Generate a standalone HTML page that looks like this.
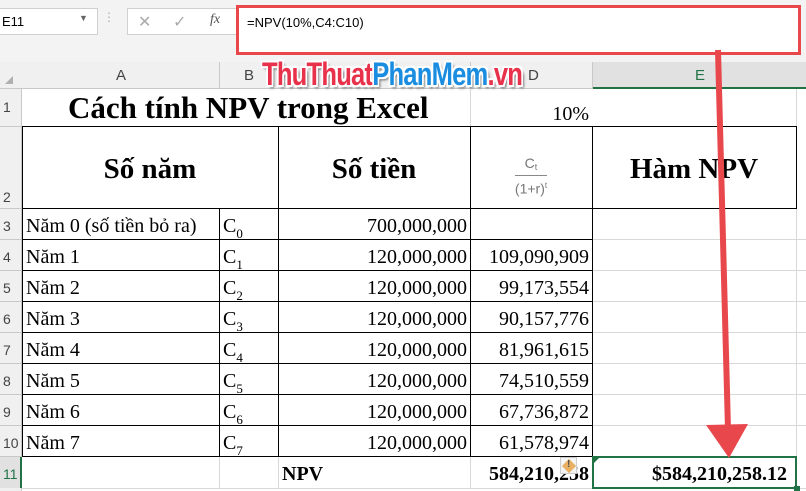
<!DOCTYPE html><html><head><meta charset="utf-8"><style>
*{margin:0;padding:0;box-sizing:border-box}
body{width:806px;height:491px;overflow:hidden;background:#fff;position:relative;font-family:"Liberation Serif",serif}
.a{position:absolute}
.t{position:absolute;font-size:20px;line-height:31px;white-space:nowrap;color:#000}
.r{text-align:right}
.hl{position:absolute;height:1px;background:#000}
.vl{position:absolute;width:1px;background:#000}
.gh{position:absolute;height:1px;background:#d8d8d8}
.gv{position:absolute;width:1px;background:#d8d8d8}
.rn{position:absolute;left:0;width:22px;font-family:"Liberation Sans",sans-serif;font-size:14px;color:#444;text-align:left;padding-left:3px}
sub{font-size:13px;vertical-align:-6px}
.ch{position:absolute;font:15px 'Liberation Sans',sans-serif;color:#444;top:67px}
</style></head><body>
<div class="a" style="left:0;top:0;width:806px;height:62px;background:#f3f3f3"></div>
<div class="a" style="left:-2px;top:8px;width:100px;height:27px;background:#fff;border:1px solid #d0d0d0;font:13px 'Liberation Sans',sans-serif;padding:5px 3px">E11<span style="position:absolute;left:80px;top:4px;font-size:9px;color:#666">▼</span></div>
<div class="a" style="top:10px;font:12px sans-serif;color:#aaa;left:103px;">⋮</div>
<div class="a" style="left:127px;top:8px;width:110px;height:27px;background:#fff;border:1px solid #d0d0d0;font:16px 'Liberation Sans',sans-serif;color:#aaa"><span class="a" style="left:10px;top:3px">✕</span><span class="a" style="left:45px;top:3px">✓</span><span class="a" style="left:82px;top:3px;font:italic 14px 'Liberation Serif';color:#555">fx</span></div>
<div class="a" style="left:236px;top:5px;width:565px;height:50px;background:#fff;border:3px solid #e8474c;font:13px 'Liberation Sans',sans-serif;padding:7px 8px">=NPV(10%,C4:C10)</div>
<div class="a" style="left:0;top:62px;width:806px;height:27px;background:#f0f0f0;border-bottom:1px solid #c8c8c8"></div>
<div class="a" style="left:592px;top:62px;width:214px;height:27px;background:#e1e1e1;border-bottom:2px solid #217346"></div>
<div class="a" style="left:0;top:89px;width:22px;height:402px;background:#f0f0f0;border-right:1px solid #c8c8c8"></div>
<div class="a" style="left:0;top:457px;width:22px;height:31px;background:#e1e1e1;border-right:2px solid #217346"></div>
<div class="a" style="left:5px;top:76px;width:8px;height:0;border-left:8px solid transparent;border-bottom:8px solid #b0b0b0"></div>
<div class="ch" style="left:116px">A</div>
<div class="ch" style="left:244px">B</div>
<div class="ch" style="left:528px">D</div>
<div class="ch" style="left:695px;color:#217346">E</div>
<div class="gv" style="left:219px;top:62px;height:27px;background:#c8c8c8"></div>
<div class="gv" style="left:278px;top:62px;height:27px;background:#c8c8c8"></div>
<div class="gv" style="left:470px;top:62px;height:27px;background:#c8c8c8"></div>
<div class="gv" style="left:592px;top:62px;height:27px;background:#c8c8c8"></div>
<div class="a" style="left:262px;top:56px;font:bold 32px 'Liberation Sans',sans-serif;letter-spacing:-1px;transform:scaleX(.8);transform-origin:left;text-shadow:2px 2px 0 #fff,-2px -2px 0 #fff,2px -2px 0 #fff,-2px 2px 0 #fff,3px 3px 3px #666"><span style="color:#e8314a">ThuThuat</span><span style="color:#1a8de0">PhanMem</span><span style="color:#e8314a">.vn</span></div>
<div class="gh" style="left:22px;top:488px;width:784px"></div>
<div class="gv" style="left:796px;top:89px;height:402px"></div>
<div class="gh" style="left:592px;top:239px;width:214px"></div><div class="gh" style="left:592px;top:270px;width:214px"></div><div class="gh" style="left:592px;top:301px;width:214px"></div><div class="gh" style="left:592px;top:332px;width:214px"></div><div class="gh" style="left:592px;top:363px;width:214px"></div><div class="gh" style="left:592px;top:394px;width:214px"></div><div class="gh" style="left:592px;top:425px;width:214px"></div>
<div class="gv" style="left:470px;top:89px;height:37px"></div>
<div class="rn" style="top:99px">1</div><div class="rn" style="top:189px">2</div>
<div class="rn" style="top:218px">3</div><div class="rn" style="top:249px">4</div><div class="rn" style="top:280px">5</div><div class="rn" style="top:311px">6</div><div class="rn" style="top:342px">7</div><div class="rn" style="top:373px">8</div><div class="rn" style="top:404px">9</div><div class="rn" style="top:435px">10</div><div class="rn" style="top:466px;color:#217346">11</div>
<div class="gh" style="left:0;top:126px;width:22px;background:#c8c8c8"></div><div class="gh" style="left:0;top:208px;width:22px;background:#c8c8c8"></div><div class="gh" style="left:0;top:239px;width:22px;background:#c8c8c8"></div><div class="gh" style="left:0;top:270px;width:22px;background:#c8c8c8"></div><div class="gh" style="left:0;top:301px;width:22px;background:#c8c8c8"></div><div class="gh" style="left:0;top:332px;width:22px;background:#c8c8c8"></div><div class="gh" style="left:0;top:363px;width:22px;background:#c8c8c8"></div><div class="gh" style="left:0;top:394px;width:22px;background:#c8c8c8"></div><div class="gh" style="left:0;top:425px;width:22px;background:#c8c8c8"></div><div class="gh" style="left:0;top:456px;width:22px;background:#c8c8c8"></div>
<div class="hl" style="left:22px;top:126px;width:775px"></div>
<div class="hl" style="left:22px;top:208px;width:775px"></div>
<div class="hl" style="left:22px;top:239px;width:570px"></div><div class="hl" style="left:22px;top:270px;width:570px"></div><div class="hl" style="left:22px;top:301px;width:570px"></div><div class="hl" style="left:22px;top:332px;width:570px"></div><div class="hl" style="left:22px;top:363px;width:570px"></div><div class="hl" style="left:22px;top:394px;width:570px"></div><div class="hl" style="left:22px;top:425px;width:570px"></div><div class="hl" style="left:22px;top:456px;width:570px"></div>
<div class="vl" style="left:22px;top:126px;height:331px"></div>
<div class="vl" style="left:219px;top:208px;height:249px"></div>
<div class="gv" style="left:219px;top:457px;height:31px"></div>
<div class="vl" style="left:278px;top:126px;height:331px"></div>
<div class="gv" style="left:278px;top:457px;height:31px"></div>
<div class="vl" style="left:470px;top:126px;height:331px"></div>
<div class="gv" style="left:470px;top:457px;height:31px"></div>
<div class="vl" style="left:592px;top:126px;height:331px"></div>
<div class="vl" style="left:796px;top:126px;height:83px"></div>
<div class="t" style="left:68px;top:92px;font-size:31px;font-weight:bold">Cách tính NPV trong Excel</div>
<div class="t r" style="left:470px;width:119px;top:99px">10%</div>
<div class="t" style="left:22px;width:256px;text-align:center;top:154px;font-size:29px;font-weight:bold">Số năm</div>
<div class="t" style="left:278px;width:192px;text-align:center;top:154px;font-size:29px;font-weight:bold">Số tiền</div>
<div class="t" style="left:592px;width:204px;text-align:center;top:154px;font-size:29px;font-weight:bold">Hàm NPV</div>
<div class="a" style="left:470px;width:122px;top:155px;text-align:center;font:14px 'Liberation Sans',sans-serif;color:#777;line-height:16px">C<sub style="font-size:9px;vertical-align:-2px">t</sub><br><span style="display:inline-block;border-top:1px solid #888;padding-top:2px">(1+r)<sup style="font-size:8px">t</sup></span></div>
<div class="t" style="left:26px;top:211px">Năm 0 (số tiền bỏ ra)</div>
<div class="t" style="left:26px;top:242px">Năm 1</div><div class="t" style="left:26px;top:273px">Năm 2</div><div class="t" style="left:26px;top:304px">Năm 3</div><div class="t" style="left:26px;top:335px">Năm 4</div><div class="t" style="left:26px;top:366px">Năm 5</div><div class="t" style="left:26px;top:397px">Năm 6</div><div class="t" style="left:26px;top:428px">Năm 7</div>
<div class="t" style="left:223px;top:211px">C<sub>0</sub></div><div class="t" style="left:223px;top:242px">C<sub>1</sub></div><div class="t" style="left:223px;top:273px">C<sub>2</sub></div><div class="t" style="left:223px;top:304px">C<sub>3</sub></div><div class="t" style="left:223px;top:335px">C<sub>4</sub></div><div class="t" style="left:223px;top:366px">C<sub>5</sub></div><div class="t" style="left:223px;top:397px">C<sub>6</sub></div><div class="t" style="left:223px;top:428px">C<sub>7</sub></div>
<div class="t r" style="left:278px;width:189px;top:211px">700,000,000</div>
<div class="t r" style="left:278px;width:189px;top:242px">120,000,000</div><div class="t r" style="left:278px;width:189px;top:273px">120,000,000</div><div class="t r" style="left:278px;width:189px;top:304px">120,000,000</div><div class="t r" style="left:278px;width:189px;top:335px">120,000,000</div><div class="t r" style="left:278px;width:189px;top:366px">120,000,000</div><div class="t r" style="left:278px;width:189px;top:397px">120,000,000</div><div class="t r" style="left:278px;width:189px;top:428px">120,000,000</div>
<div class="t r" style="left:470px;width:119px;top:242px">109,090,909</div><div class="t r" style="left:470px;width:119px;top:273px">99,173,554</div><div class="t r" style="left:470px;width:119px;top:304px">90,157,776</div><div class="t r" style="left:470px;width:119px;top:335px">81,961,615</div><div class="t r" style="left:470px;width:119px;top:366px">74,510,559</div><div class="t r" style="left:470px;width:119px;top:397px">67,736,872</div><div class="t r" style="left:470px;width:119px;top:428px">61,578,974</div>
<div class="t" style="left:282px;top:459px;font-weight:bold">NPV</div>
<div class="t r" style="left:470px;width:119px;top:459px;font-weight:bold">584,210,258</div>
<div class="a" style="left:560px;top:457px;width:17px;height:17px;background:#f4f4f4;border:1px solid #ccc"><div class="a" style="left:3px;top:3px;width:10px;height:10px;background:#e8b060;transform:rotate(45deg)"></div><div class="a" style="left:6px;top:1px;font:bold 10px sans-serif;color:#555">!</div></div>
<div class="a" style="left:592px;top:456px;width:205px;height:33px;border:2px solid #217346"></div>
<div class="a" style="left:794px;top:486px;width:6px;height:5px;background:#217346"></div>
<div class="a" style="left:594px;top:458px;border-top:5px solid #217346;border-right:5px solid transparent"></div>
<div class="t r" style="left:592px;width:195px;top:459px;font-weight:bold">$584,210,258.12</div>
<svg class="a" style="left:0;top:0" width="806" height="491"><line x1="718" y1="50" x2="728" y2="430" stroke="#e8474c" stroke-width="6"/><polygon points="706,425 748,424 729,458" fill="#e8474c"/></svg>
</body></html>
